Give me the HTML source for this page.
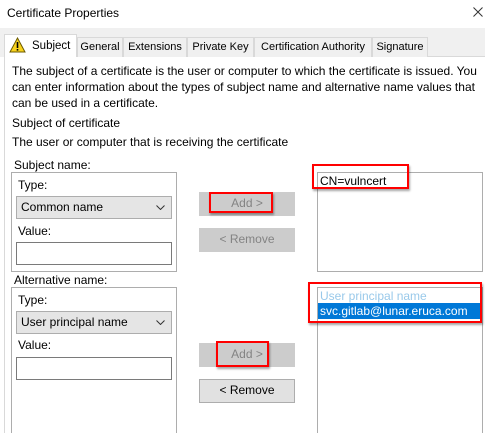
<!DOCTYPE html>
<html><head><style>
*{box-sizing:border-box;margin:0;padding:0}
html,body{width:485px;height:433px;overflow:hidden}
body{background:#fff;font-family:"Liberation Sans",sans-serif;font-size:12px;color:#000;position:relative}
.a{position:absolute;white-space:nowrap}
.tab{position:absolute;top:37px;height:20px;border:1px solid #d9d9d9;border-bottom:none;background:#f0f0f0;font-size:11px;line-height:18px;text-align:center;overflow:hidden}
.btn{position:absolute;background:#cccccc;border:1px solid #cccccc;color:#838383;text-align:center;line-height:21px;font-size:12px}
.red{position:absolute;border:2px solid #ff0000;box-shadow:1px 2px 2px rgba(0,0,0,.35)}
.grp{position:absolute;border:1px solid #adadad}
.cmb{position:absolute;background:#e5e5e5;border:1px solid #adadad;line-height:20px;padding-left:4px}
.inp{position:absolute;background:#fff;border:1px solid #7a7a7a}
</style></head><body>
<div class="a" style="left:7px;top:6px">Certificate Properties</div>
<svg class="a" style="left:473px;top:7px" width="10" height="10" viewBox="0 0 10 10"><path d="M0.5 0.5 L9.5 9.5 M9.5 0.5 L0.5 9.5" stroke="#333" stroke-width="1"/></svg>
<div class="a" style="left:0;top:28px;width:485px;height:29px;background:#f0f0f0"></div>
<div class="a" style="left:4px;top:56px;width:1px;height:377px;background:#d9d9d9"></div>
<div class="a" style="left:4px;top:56px;width:481px;height:1px;background:#d9d9d9"></div>
<div class="tab" style="left:4px;top:34px;width:73px;height:23px;background:#fff;line-height:22px;padding-left:27px;text-align:left;font-size:11.5px">Subject</div>
<svg class="a" style="left:9px;top:37px" width="17" height="16" viewBox="0 0 17 16"><path d="M8.5 1 L16 15 L1 15 Z" fill="#f8d21c" stroke="#6b5a00" stroke-width="1"/><rect x="7.7" y="5" width="1.6" height="6" fill="#000"/><rect x="7.7" y="12" width="1.6" height="1.6" fill="#000"/></svg>
<div class="tab" style="left:77px;width:46px">General</div>
<div class="tab" style="left:123px;width:64px">Extensions</div>
<div class="tab" style="left:187px;width:67px">Private Key</div>
<div class="tab" style="left:254px;width:118px">Certification Authority</div>
<div class="tab" style="left:372px;width:56px">Signature</div>
<div class="a" style="left:12px;top:63px;line-height:16px">The subject of a certificate is the user or computer to which the certificate is issued. You<br>can enter information about the types of subject name and alternative name values that<br>can be used in a certificate.</div>
<div class="a" style="left:12px;top:116px">Subject of certificate</div>
<div class="a" style="left:12px;top:135px">The user or computer that is receiving the certificate</div>

<div class="a" style="left:14px;top:158px">Subject name:</div>
<div class="grp" style="left:11px;top:172px;width:166px;height:100px"></div>
<div class="a" style="left:18px;top:178px">Type:</div>
<div class="cmb" style="left:16px;top:196px;width:156px;height:23px">Common name<svg style="position:absolute;right:6px;top:8px" width="9" height="5" viewBox="0 0 9 5"><path d="M0.5 0.5 L4.5 4.5 L8.5 0.5" stroke="#333" fill="none"/></svg></div>
<div class="a" style="left:18px;top:224px">Value:</div>
<div class="inp" style="left:16px;top:242px;width:156px;height:23px"></div>
<div class="btn" style="left:199px;top:192px;width:96px;height:24px">Add &gt;</div>
<div class="btn" style="left:199px;top:228px;width:96px;height:24px">&lt; Remove</div>
<div class="red" style="left:209px;top:192px;width:64px;height:21px"></div>
<div class="grp" style="left:317px;top:172px;width:166px;height:100px"></div>
<div class="a" style="left:320px;top:174px">CN=vulncert</div>
<div class="red" style="left:312px;top:164px;width:97px;height:25px"></div>

<div class="a" style="left:14px;top:273px">Alternative name:</div>
<div class="grp" style="left:11px;top:287px;width:166px;height:160px"></div>
<div class="a" style="left:18px;top:293px">Type:</div>
<div class="cmb" style="left:16px;top:311px;width:156px;height:23px">User principal name<svg style="position:absolute;right:6px;top:8px" width="9" height="5" viewBox="0 0 9 5"><path d="M0.5 0.5 L4.5 4.5 L8.5 0.5" stroke="#333" fill="none"/></svg></div>
<div class="a" style="left:18px;top:338px">Value:</div>
<div class="inp" style="left:16px;top:357px;width:156px;height:23px"></div>
<div class="btn" style="left:199px;top:343px;width:96px;height:24px">Add &gt;</div>
<div class="btn" style="left:199px;top:379px;width:96px;height:24px;background:#e1e1e1;border-color:#adadad;color:#000">&lt; Remove</div>
<div class="red" style="left:216px;top:341px;width:53px;height:26px"></div>
<div class="grp" style="left:317px;top:287px;width:166px;height:160px"></div>
<div class="a" style="left:320px;top:289px;color:#99c9ea">User principal name</div>
<div class="a" style="left:318px;top:303px;width:164px;height:16px;background:#0078d7;color:#fff;padding-left:2px;line-height:16px">svc.gitlab@lunar.eruca.com</div>
<div class="red" style="left:308px;top:282px;width:174px;height:41px"></div>
</body></html>
